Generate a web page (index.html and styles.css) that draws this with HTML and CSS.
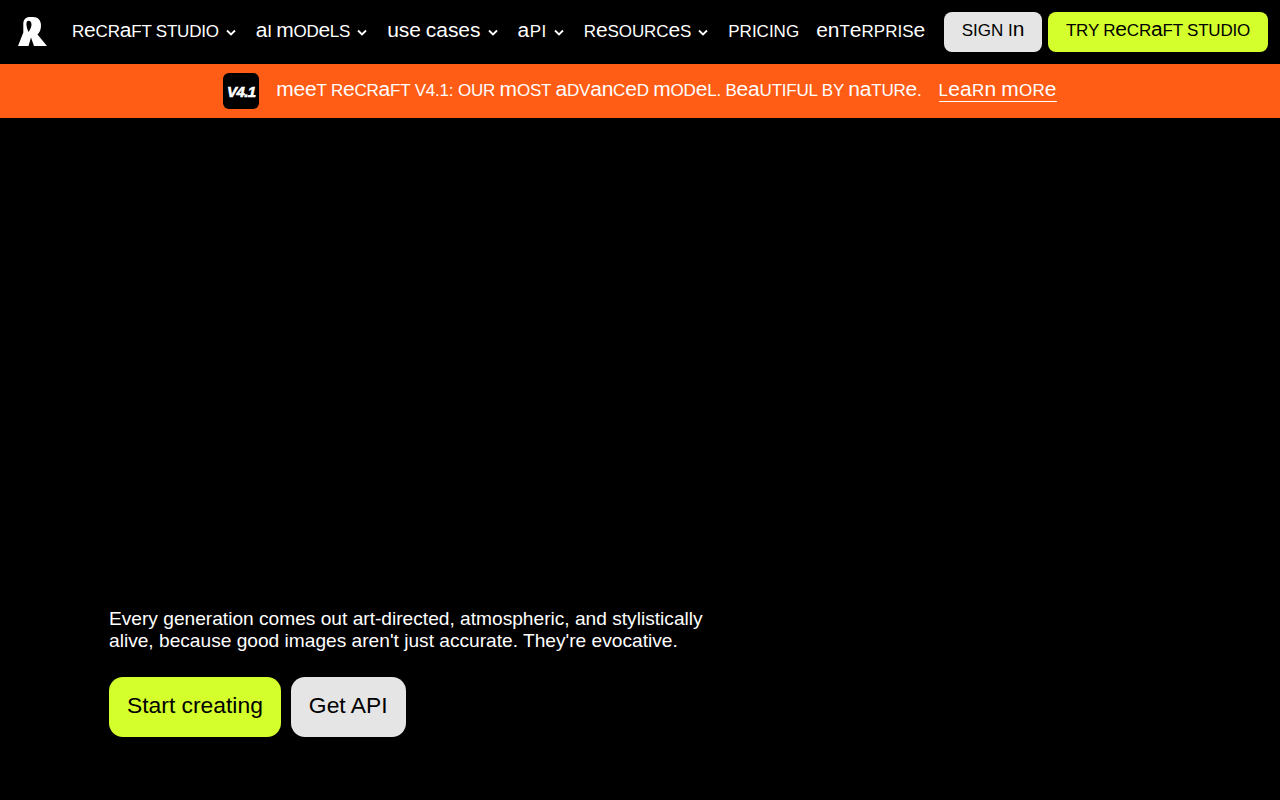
FILE: index.html
```html
<!DOCTYPE html>
<html lang="en">
<head>
<meta charset="utf-8">
<title>Recraft</title>
<link rel="stylesheet" href="styles.css">
</head>
<body>
<div class="page">
  <header class="topbar">
    <a class="logo" href="#" aria-label="Recraft">
      <svg width="30" height="30" viewBox="0 0 30 30"><path fill="#fff" fill-rule="evenodd" d="M5.300 7C5.300 2.500 8 0 12 0H15C20 0 23 3.200 23 8.500C23 12.500 21.800 15.500 19.500 17.500L29 29H16L13 20.500L10.500 29H0L5.300 15.500ZM10.500 3.800C8 3.800 7.500 8 10.500 15C13 11.500 14 8 13.300 6C12.800 4.500 11.800 3.800 10.500 3.800Z"/></svg>
    </a>
    <nav class="nav">
      <a class="nav-item sp-studio" href="#">R<i>e</i>CR<i>a</i>FT STUDIO<svg class="chev" viewBox="0 0 12 12"><path d="M2 4.500L6 8.500L10 4.500"/></svg></a>
      <a class="nav-item sp-models" href="#"><i>a</i>I <i>m</i>OD<i>e</i>LS<svg class="chev" viewBox="0 0 12 12"><path d="M2 4.500L6 8.500L10 4.500"/></svg></a>
      <a class="nav-item" href="#"><i>use</i> <i>cases</i><svg class="chev" viewBox="0 0 12 12"><path d="M2 4.500L6 8.500L10 4.500"/></svg></a>
      <a class="nav-item sp-api" href="#"><i>a</i>PI<svg class="chev" viewBox="0 0 12 12"><path d="M2 4.500L6 8.500L10 4.500"/></svg></a>
      <a class="nav-item sp-res" href="#">R<i>e</i>SOURC<i>e</i>S<svg class="chev" viewBox="0 0 12 12"><path d="M2 4.500L6 8.500L10 4.500"/></svg></a>
      <a class="nav-item" href="#">PRICING</a>
      <a class="nav-item sp-ent" href="#"><i>en</i>T<i>e</i>RPRIS<i>e</i></a>
    </nav>
    <div class="actions">
      <a class="btn btn-grey" href="#">SIGN I<i>n</i></a>
      <a class="btn btn-lime sp-try" href="#">TRY R<i>e</i>CR<i>a</i>FT STUDIO</a>
    </div>
  </header>
  <div class="banner">
    <span class="badge">V4.1</span>
    <span class="banner-text"><i>mee</i>T R<i>e</i>CR<i>a</i>FT V4.1: OUR <i>m</i>OST <i>a</i>DV<i>an</i>C<i>e</i>D <i>m</i>OD<i>e</i>L. B<i>ea</i>UTIFUL BY <i>na</i>TUR<i>e</i>.</span>
    <a class="banner-link" href="#">L<i>ea</i>R<i>n</i> <i>m</i>OR<i>e</i></a>
  </div>
  <main class="hero">
    <p class="lede">Every generation comes out art-directed, atmospheric, and stylistically alive, because good images aren't just accurate. They're evocative.</p>
    <div class="cta">
      <a class="cta-btn btn-lime" href="#">Start creating</a>
      <a class="cta-btn btn-grey" href="#">Get API</a>
    </div>
  </main>
</div>
</body>
</html>
```
FILE: styles.css
```css
* { box-sizing: border-box; }
html, body { margin: 0; height: 100%; background: #000; }
body { font-family: "Liberation Sans", Arial, sans-serif; color: #fff; overflow: hidden; }
a { color: inherit; text-decoration: none; }
i { font-style: normal; font-size: 1.235em; line-height: 0; }
.page { height: 800px; display: flex; flex-direction: column; }

.topbar { height: 64px; display: flex; align-items: center; padding: 0 12px 0 18px; }
.logo { display: flex; width: 30px; height: 30px; margin-right: 24px; }
.nav { display: flex; align-items: center; gap: 19px; flex: 1; }
.nav-item { display: block; font-size: 17px; line-height: 22px; white-space: nowrap; }
.sp-studio { letter-spacing: -.2px; }
.sp-models { letter-spacing: -.25px; }
.sp-api { letter-spacing: .5px; }
.sp-res { letter-spacing: -.1px; }
.sp-ent { margin-left: -2px; }
.chev { display: inline-block; width: 12px; height: 12px; margin-left: 6px; vertical-align: -1px; fill: none; stroke: #fff; stroke-width: 1.800; }

.actions { display: flex; gap: 6px; }
.btn { display: block; height: 40px; line-height: 37px; text-align: center; border-radius: 8px; font-size: 17px; white-space: nowrap; }
.btn-grey { background: #e5e5e5; color: #000; }
.btn-lime { background: #d4ff2c; color: #000; }
.sp-try { letter-spacing: -.2px; }
.actions .btn-grey { width: 98px; }
.actions .btn-lime { width: 220px; }

.banner { height: 54px; background: #ff5d15; display: flex; align-items: center; justify-content: center; }
.badge { width: 36px; height: 36px; border-radius: 6px; background: #000; color: #fff; display: flex; align-items: center; justify-content: center; font-size: 15px; font-weight: 700; font-style: italic; letter-spacing: -.6px; -webkit-text-stroke: .6px #fff; margin-right: 17px; }
.banner-text { font-size: 17px; line-height: 22px; white-space: nowrap; margin-right: 17px; letter-spacing: -.2px; }
.banner-link { font-size: 17px; line-height: 20px; letter-spacing: .2px; border-bottom: 1px solid #fff; }

.hero { margin-top: auto; padding: 0 0 63px 109px; }
.lede { margin: 0 0 25px; width: 620px; font-size: 19.150px; line-height: 22px; }
.cta { display: flex; gap: 10px; }
.cta-btn { display: flex; align-items: center; height: 60px; padding: 0 18px 4px; border-radius: 14px; font-size: 22.850px; }
```
